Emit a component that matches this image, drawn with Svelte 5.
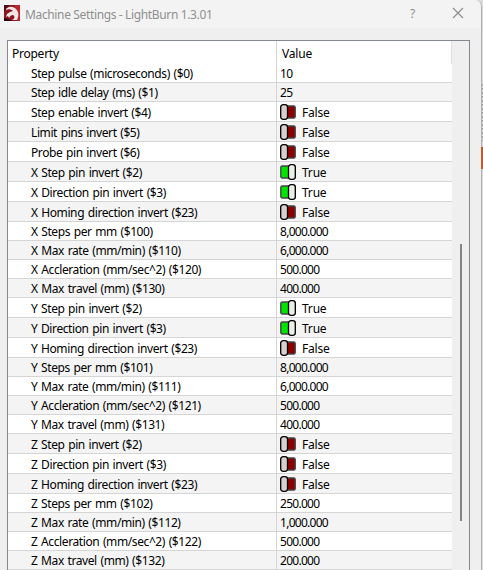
<script>
    const settings = [
        { name: 'Step pulse (microseconds) ($0)', value: '10' },
        { name: 'Step idle delay (ms) ($1)', value: '25' },
        { name: 'Step enable invert ($4)', value: false },
        { name: 'Limit pins invert ($5)', value: false },
        { name: 'Probe pin invert ($6)', value: false },
        { name: 'X Step pin invert ($2)', value: true },
        { name: 'X Direction pin invert ($3)', value: true },
        { name: 'X Homing direction invert ($23)', value: false },
        { name: 'X Steps per mm ($100)', value: '8,000.000' },
        { name: 'X Max rate (mm/min) ($110)', value: '6,000.000' },
        { name: 'X Accleration (mm/sec^2) ($120)', value: '500.000' },
        { name: 'X Max travel (mm) ($130)', value: '400.000' },
        { name: 'Y Step pin invert ($2)', value: true },
        { name: 'Y Direction pin invert ($3)', value: true },
        { name: 'Y Homing direction invert ($23)', value: false },
        { name: 'Y Steps per mm ($101)', value: '8,000.000' },
        { name: 'Y Max rate (mm/min) ($111)', value: '6,000.000' },
        { name: 'Y Accleration (mm/sec^2) ($121)', value: '500.000' },
        { name: 'Y Max travel (mm) ($131)', value: '400.000' },
        { name: 'Z Step pin invert ($2)', value: false },
        { name: 'Z Direction pin invert ($3)', value: false },
        { name: 'Z Homing direction invert ($23)', value: false },
        { name: 'Z Steps per mm ($102)', value: '250.000' },
        { name: 'Z Max rate (mm/min) ($112)', value: '1,000.000' },
        { name: 'Z Accleration (mm/sec^2) ($122)', value: '500.000' },
        { name: 'Z Max travel (mm) ($132)', value: '200.000' }
    ];

    let rows = $state(settings);

    function toggle(row) {
        if (typeof row.value === 'boolean') row.value = !row.value;
    }
</script>

<div class="screen">
    <div class="window">
        <div class="titlebar">
            <svg class="logo" width="16" height="16" viewBox="0 0 16 16">
                <rect width="16" height="16" fill="#8a1722" />
                <path d="M11 0h5v16h-3L10 6z" fill="#bd2430" />
                <path d="M0 0h5L2 4l-2 3z" fill="#4a0e14" />
                <path d="M2 4c3-3 7-3 10 0 3 3 3 7 1 11H8c3-1 3-4 1-5-2 0-3 1-4 3l-1-2-2 1 1-3 3-2 3-1C7 4 4 4 2 5z" fill="#f0e6e6" />
                <path d="M0 16v-3l4 1 4 2z" fill="#26090c" />
            </svg>
            <span class="title">Machine Settings - LightBurn 1.3.01</span>
            <span class="help">?</span>
            <svg class="close" width="12" height="12" viewBox="0 0 12 12">
                <path d="M1 1l10 10M11 1L1 11" fill="none" stroke="#8b8b8b" stroke-width="1.1" />
            </svg>
        </div>

        <div class="frame">
            <div class="table">
                <div class="header">
                    <div class="name">Property</div>
                    <div class="value">Value</div>
                </div>
                {#each rows as row}
                    <div class="row" class:bool={typeof row.value === 'boolean'}>
                        <div class="name">{row.name}</div>
                        <!-- svelte-ignore a11y_click_events_have_key_events, a11y_no_static_element_interactions -->
                        <div class="value" onclick={() => toggle(row)}>
                            {#if typeof row.value === 'boolean'}
                                <svg class="switch" class:on={row.value} width="16" height="16" viewBox="0 0 16 16">
                                    <rect class="track" x="0.8" y="2" width="14.4" height="12" rx="1.5" />
                                    <rect class="knob" x={row.value ? 8.5 : 0.7} y="0.7" width="6.8" height="14.6" rx="2.5" />
                                </svg>
                                <span>{row.value ? 'True' : 'False'}</span>
                            {:else}
                                <span class="number">{row.value}</span>
                            {/if}
                        </div>
                    </div>
                {/each}
            </div>
            <div class="scrollbar"><div class="thumb"></div></div>
        </div>
    </div>
    <div class="behind">
        <div class="lines"></div>
        <div class="accent"></div>
    </div>
</div>

<style>
    :global(body) {
        margin: 0;
        overflow: hidden;
    }

    .screen {
        display: flex;
        width: 483px;
        height: 570px;
        overflow: hidden;
        background: #d9d9d9;
        font-family: "Noto Sans", "Open Sans", sans-serif;
        font-size: 12px;
        color: #000;
    }

    .window {
        box-sizing: border-box;
        width: 482px;
        height: 580px;
        background: #efefef;
        border-right: 1px solid #b0b0b0;
        border-top-right-radius: 7px;
        overflow: hidden;
    }

    .titlebar {
        display: flex;
        align-items: center;
        height: 28px;
        padding-left: 4px;
        background: #f3f3f3;
        color: #8f8f8f;
    }

    .logo {
        margin-top: -2px;
    }

    .title {
        width: 383px;
        margin-left: 5px;
        white-space: nowrap;
        letter-spacing: -0.36px;
    }

    .help {
        width: 10px;
        margin-left: 2px;
        margin-top: -2px;
    }

    .close {
        margin-left: 32px;
        margin-top: -2px;
    }

    .frame {
        display: flex;
        box-sizing: border-box;
        width: 463px;
        height: 540px;
        margin: 12px 0 0 7px;
        border: 1px solid #828790;
    }

    .table {
        width: 444px;
        background: #fff;
    }

    .header, .row {
        display: flex;
        line-height: 20px;
        white-space: nowrap;
    }

    .header {
        height: 23px;
        line-height: 26px;
    }

    .row {
        box-sizing: border-box;
        height: 19px;
        border-bottom: 1px solid #d5d5d5;
    }

    .row.bool {
        height: 20px;
        line-height: 21px;
    }

    .row:nth-child(odd) {
        background: #f4f4f4;
    }

    .name {
        box-sizing: border-box;
        width: 269px;
        padding-left: 23px;
        border-right: 1px solid #d5d5d5;
        letter-spacing: -0.4px;
        word-spacing: 0.9px;
    }

    .header .name {
        padding-left: 4px;
        letter-spacing: -0.25px;
    }

    .value {
        display: flex;
        flex: 1;
        padding-left: 3px;
        letter-spacing: -0.2px;
    }

    .header .value {
        padding-left: 5px;
        border-right: 1px solid #dedede;
    }

    .number {
        letter-spacing: -0.72px;
    }

    .switch {
        margin: 2px 6px 0 0;
    }

    .track {
        fill: #8b0000;
        stroke: #444;
        stroke-width: 1.4;
    }

    .knob {
        fill: #dacfcf;
        stroke: #000;
        stroke-width: 1.3;
    }

    .on .track {
        fill: #00e400;
    }

    .on .knob {
        fill: #e9f0e6;
    }

    .scrollbar {
        flex: 1;
        margin-left: 1px;
        background: #efefef;
    }

    .thumb {
        width: 2px;
        height: 277px;
        margin: 203px 0 0 7px;
        background: #858585;
    }

    .behind {
        width: 1px;
        padding-top: 82px;
    }

    .lines {
        height: 59px;
        margin-bottom: 6px;
        background: repeating-linear-gradient(#d9d9d9 0 2px, #a2a2a2 2px 4px);
    }

    .accent {
        width: 2px;
        height: 22px;
        margin-left: -1px;
        background: #c4572b;
    }
</style>
